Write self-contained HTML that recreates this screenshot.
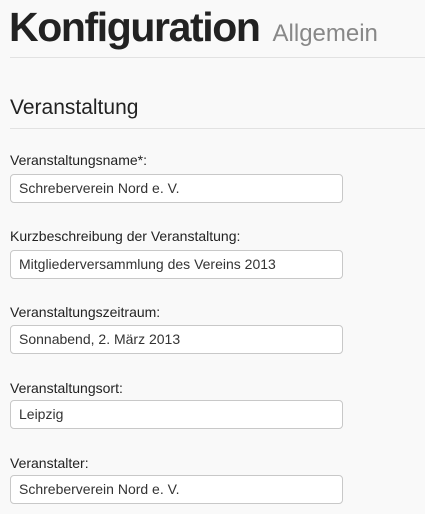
<!DOCTYPE html>
<html><head><meta charset="utf-8"><style>
body{margin:0;background:#f9f9f9;font-family:"Liberation Sans",Arial,sans-serif;width:425px;height:514px;overflow:hidden;position:relative;color:#222}
.h1{position:absolute;left:9px;top:4px;font-size:41px;font-weight:bold;color:#222;letter-spacing:-1.4px;white-space:nowrap}
.h1 small{font-size:24px;font-weight:normal;color:#888;letter-spacing:0;margin-left:3px}
.hr{position:absolute;left:10px;right:0;height:1px;background:#e2e2e2}
.h2{position:absolute;left:10px;top:96px;font-size:21px;color:#222}
.lab{position:absolute;left:10px;font-size:14px;color:#222}
.inp{position:absolute;left:10px;width:331px;height:27px;background:#fff;border:1px solid #c8c8c8;border-radius:4px;font-size:14px;line-height:27px;box-sizing:content-box}
.inp span{margin-left:8px;color:#333}
</style></head><body>
<div class="h1">Konfiguration <small>Allgemein</small></div>
<div class="hr" style="top:57px"></div>
<div class="h2">Veranstaltung</div>
<div class="hr" style="top:128px"></div>
<div class="lab" style="top:152px">Veranstaltungsname*:</div>
<div class="inp" style="top:174px"><span>Schreberverein Nord e. V.</span></div>
<div class="lab" style="top:228px">Kurzbeschreibung der Veranstaltung:</div>
<div class="inp" style="top:250px"><span>Mitgliederversammlung des Vereins 2013</span></div>
<div class="lab" style="top:304px">Veranstaltungszeitraum:</div>
<div class="inp" style="top:325px"><span>Sonnabend, 2. März 2013</span></div>
<div class="lab" style="top:380px">Veranstaltungsort:</div>
<div class="inp" style="top:400px"><span>Leipzig</span></div>
<div class="lab" style="top:455px">Veranstalter:</div>
<div class="inp" style="top:475px"><span>Schreberverein Nord e. V.</span></div>
</body></html>
